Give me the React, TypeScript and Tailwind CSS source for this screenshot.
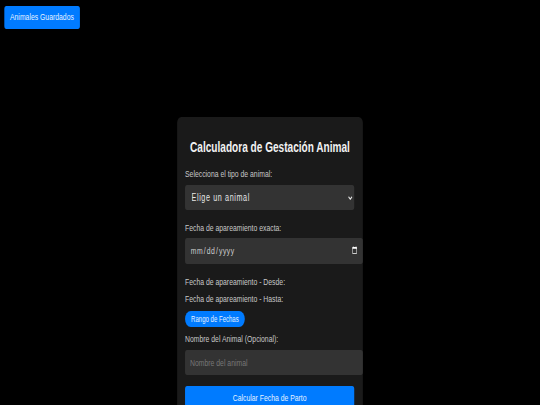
export default function App() {
  return (
    <div className="h-[405px] w-[540px] overflow-hidden bg-black">
      {/* la captura original viene comprimida en horizontal */}
      <main className="h-[405px] w-[750px] origin-top-left scale-x-[.72] font-['Liberation_Sans',Arial,sans-serif] text-white">
        <div className="flex pl-[5.5px] pt-1.5">
          <button className="h-[23px] w-[105.5px] rounded-[3px] bg-[#007bff] text-center text-[9.5px] whitespace-nowrap text-[#e6f2ff]">
            Animales Guardados
          </button>
        </div>

        <div className="mx-auto mt-[88px] w-[258px] rounded-md bg-[#1a1a1a] px-[11px] pt-[21px]">
          <h1 className="whitespace-nowrap text-center text-[14px] font-bold leading-[18px] text-[#f2f2f2]">
            Calculadora de Gestación Animal
          </h1>

          <label className="mt-[12px] block text-[9.5px] leading-3 text-[#c8c8c8]">
            Selecciona el tipo de animal:
          </label>
          <div className="relative mt-[5px] h-[25px] w-[235px]">
            <select className="block h-full w-full appearance-none rounded-[3px] bg-[#333333] pl-[9px] text-[10px] tracking-[.85px] text-[#e6e6e6]">
              <option>Elige un animal</option>
            </select>
            <svg
              viewBox="0 0 8 5"
              className="pointer-events-none absolute right-[2px] top-[11px] h-[4px] w-[7px] text-[#e6e6e6]"
              fill="none"
              stroke="currentColor"
              strokeWidth="1.6"
            >
              <path d="M1 1l3 3 3-3" />
            </svg>
          </div>

          <label className="mt-[12px] block text-[9.5px] leading-3 text-[#c8c8c8]">
            Fecha de apareamiento exacta:
          </label>
          <input
            type="date"
            className="mt-[4px] block h-[26px] w-[247px] rounded-[3px] bg-[#333333] pl-[7px] pr-[5px] text-[9.5px] tracking-[.6px] text-[#d0d0d0] [color-scheme:dark]"
          />

          <label className="mt-[12px] block text-[9.5px] leading-3 text-[#c8c8c8]">
            Fecha de apareamiento - Desde:
          </label>
          <label className="mt-[5px] block text-[9.5px] leading-3 text-[#c8c8c8]">
            Fecha de apareamiento - Hasta:
          </label>

          <button className="mt-[6px] block h-[16px] w-[83px] whitespace-nowrap rounded-full bg-[#007bff] text-center text-[8.4px] text-[#e6f2ff]">
            Rango de Fechas
          </button>

          <label className="mt-[6px] block text-[9.5px] leading-3 text-[#c8c8c8]">
            Nombre del Animal (Opcional):
          </label>
          <input
            placeholder="Nombre del animal"
            className="mt-[5px] block h-[25px] w-[247px] rounded-[3px] bg-[#333333] px-[7px] text-[9.5px] text-[#d0d0d0] placeholder:text-[#777777]"
          />

          <button className="mt-[11px] block h-[24px] w-[235px] rounded-[3px] bg-[#007bff] text-center text-[9.5px] text-[#e6f2ff]">
            Calcular Fecha de Parto
          </button>
        </div>
      </main>
    </div>
  );
}
